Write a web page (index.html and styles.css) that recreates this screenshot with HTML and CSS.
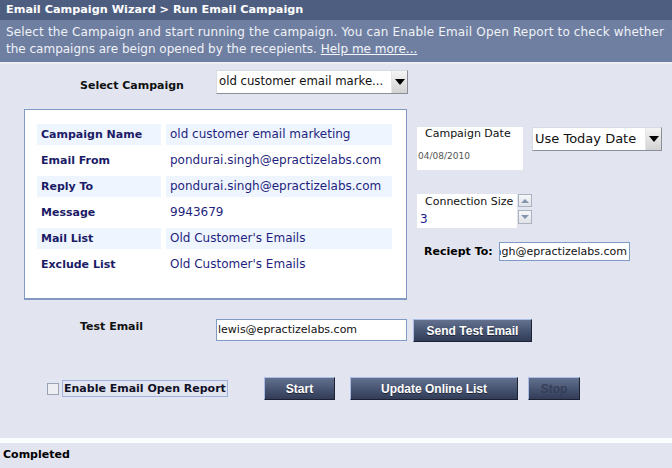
FILE: index.html
```html
<!DOCTYPE html>
<html>
<head>
<meta charset="utf-8">
<link rel="stylesheet" href="styles.css">
</head>
<body>
<div class="header">Email Campaign Wizard &gt; Run Email Campaign</div>
<div class="desc"><span class="l1">Select the Campaign and start running the campaign. You can Enable Email Open Report to check whether</span> the campaigns are beign opened by the recepients. <a href="#">Help me more...</a></div>
<div class="main">
  <div class="row r1">
    <span class="lbl lbl-select">Select Campaign</span>
    <div class="select sel-campaign"><span class="sel-text">old customer email marke...</span><span class="arrow"><i></i></span></div>
  </div>
  <div class="row r2">
    <div class="infobox">
      <div class="grid">
        <div class="k hl">Campaign Name</div><div class="v hl">old customer email marketing</div>
        <div class="k">Email From</div><div class="v">pondurai.singh@epractizelabs.com</div>
        <div class="k hl">Reply To</div><div class="v hl">pondurai.singh@epractizelabs.com</div>
        <div class="k">Message</div><div class="v">9943679</div>
        <div class="k hl">Mail List</div><div class="v hl">Old Customer's Emails</div>
        <div class="k">Exclude List</div><div class="v">Old Customer's Emails</div>
      </div>
    </div>
    <div class="side">
      <div class="daterow">
        <div class="datebox">
          <div class="dt-title">Campaign Date</div>
          <div class="dt-val">04/08/2010</div>
        </div>
        <div class="select sel-date"><span class="sel-text">Use Today Date</span><span class="arrow"><i></i></span></div>
      </div>
      <div class="connrow">
        <div class="connbox">
          <div class="cn-title">Connection Size</div>
          <div class="cn-val">3</div>
        </div>
        <div class="spin">
          <span class="spin-btn up"><i></i></span>
          <span class="spin-btn down"><i></i></span>
        </div>
      </div>
      <div class="reciept">
        <span class="lbl lbl-reciept">Reciept To:</span>
        <div class="input scroll"><span>pondurai.singh@epractizelabs.com</span></div>
      </div>
    </div>
  </div>
  <div class="row r3">
    <span class="lbl lbl-test">Test Email</span>
    <div class="input test-input">lewis@epractizelabs.com</div>
    <button class="btn btn-send">Send Test Email</button>
  </div>
  <div class="row r4">
    <span class="checkbox"></span>
    <span class="chk-label">Enable Email Open Report</span>
    <button class="btn btn-start">Start</button>
    <button class="btn btn-update">Update Online List</button>
    <button class="btn btn-stop">Stop</button>
  </div>
</div>
<div class="divider"></div>
<div class="status">Completed</div>
</body>
</html>
```
FILE: styles.css
```css
html, body {
  margin: 0;
  padding: 0;
}
body {
  width: 672px;
  height: 468px;
  overflow: hidden;
  background: #e2e5ef;
  font-family: "DejaVu Sans", Verdana, sans-serif;
  color: #111;
}
.header {
  height: 20px;
  background: #4e5e80;
  color: #fff;
  font-weight: bold;
  font-size: 11.25px;
  line-height: 20px;
  padding-left: 6px;
}
.desc {
  height: 44px;
  box-sizing: border-box;
  background: #6f7fa1;
  color: #f0f2f8;
  font-size: 12px;
  line-height: 17px;
  padding: 4px 6px 0;
  border-bottom: 2px solid #eceef4;
}
.desc .l1 {
  letter-spacing: 0.15px;
}
.desc a {
  color: #f4f6fb;
  text-decoration: underline;
}
.main {
  height: 374px;
  box-sizing: border-box;
  padding-top: 6px;
}
.row {
  display: flex;
  align-items: flex-start;
}
.lbl {
  font-weight: bold;
  font-size: 11px;
  color: #111;
  white-space: nowrap;
}
.lbl-select {
  box-sizing: border-box;
  width: 216px;
  padding-left: 80px;
  padding-top: 9px;
  line-height: 14px;
}
.select {
  box-sizing: border-box;
  height: 24px;
  background: #fff;
  border: 1px solid;
  border-color: #d8dbe2 #8a8f99 #8a8f99 #d8dbe2;
  display: flex;
  align-items: stretch;
}
.sel-text {
  flex: 1;
  overflow: hidden;
  white-space: nowrap;
  color: #111;
  padding-left: 2px;
  line-height: 21px;
}
.sel-campaign {
  width: 192px;
  font-size: 11.7px;
}
.sel-date {
  width: 130px;
  font-size: 13px;
}
.arrow {
  width: 15px;
  background: linear-gradient(#f4f4f4, #d2d2d2);
  border-left: 1px solid #e6e6e6;
  display: flex;
  align-items: center;
  justify-content: center;
}
.arrow i {
  width: 0;
  height: 0;
  border-left: 5px solid transparent;
  border-right: 5px solid transparent;
  border-top: 6px solid #000;
}
.r2 {
  margin-top: 15px;
}
.infobox {
  margin-left: 24px;
  width: 383px;
  height: 191px;
  box-sizing: border-box;
  background: #fff;
  border: 1px solid #8299c2;
  border-bottom-width: 2px;
  padding: 14px 0 0 12px;
}
.grid {
  display: grid;
  grid-template-columns: 124px 226px;
  grid-auto-rows: 21px;
  column-gap: 5px;
  row-gap: 5px;
}
.k, .v {
  line-height: 21px;
  padding-left: 4px;
  white-space: nowrap;
}
.k {
  font-weight: bold;
  font-size: 11px;
  color: #1b1b66;
}
.v {
  font-size: 12px;
  color: #1f1f80;
}
.hl {
  background: #eef5fe;
}
.side {
  margin-left: 10px;
  padding-top: 18px;
}
.daterow {
  display: flex;
  align-items: flex-start;
}
.datebox {
  width: 106px;
  height: 43px;
  background: #fff;
  box-sizing: border-box;
}
.dt-title {
  font-size: 11px;
  line-height: 14px;
  padding-left: 8px;
  color: #111;
}
.dt-val {
  font-size: 9px;
  line-height: 14px;
  margin-top: 8px;
  padding-left: 1px;
  color: #555;
}
.sel-date {
  margin-left: 9px;
}
.connrow {
  display: flex;
  margin-top: 24px;
}
.connbox {
  width: 100px;
  height: 34px;
  background: #fff;
}
.cn-title {
  font-size: 11px;
  line-height: 14px;
  padding-top: 1px;
  padding-left: 8px;
  color: #111;
}
.cn-val {
  font-size: 12px;
  line-height: 14px;
  padding-top: 3px;
  padding-left: 3px;
  color: #1a1a8c;
}
.spin {
  margin-left: 1px;
  width: 14px;
  display: flex;
  flex-direction: column;
  gap: 3px;
}
.spin-btn {
  box-sizing: border-box;
  height: 13px;
  border: 1px solid #aab2c2;
  background: linear-gradient(#f6f7f9, #dfe2e8);
  display: flex;
  align-items: center;
  justify-content: center;
}
.spin-btn.down {
  height: 14px;
}
.spin-btn i {
  width: 0;
  height: 0;
  border-left: 4px solid transparent;
  border-right: 4px solid transparent;
}
.spin-btn.up i {
  border-bottom: 4px solid #8594ad;
}
.spin-btn.down i {
  border-top: 4px solid #8594ad;
}
.reciept {
  display: flex;
  align-items: center;
  margin-top: 14px;
}
.lbl-reciept {
  width: 82px;
  box-sizing: border-box;
  padding-left: 7px;
  font-size: 11px;
  color: #000;
}
.input {
  box-sizing: border-box;
  background: #fff;
  border: 1px solid #7f9cc6;
  font-size: 11px;
  color: #111;
  white-space: nowrap;
  overflow: hidden;
}
.scroll {
  width: 131px;
  height: 19px;
  display: flex;
  justify-content: flex-end;
  align-items: center;
  padding-right: 2px;
}
.r3 {
  margin-top: 19px;
}
.lbl-test {
  box-sizing: border-box;
  width: 216px;
  padding-left: 80px;
  padding-top: 1px;
  line-height: 14px;
}
.test-input {
  width: 191px;
  height: 22px;
  line-height: 20px;
  padding-left: 1px;
}
.btn {
  box-sizing: border-box;
  height: 23px;
  margin: 0;
  padding: 0;
  background: linear-gradient(#63718f, #485573 50%, #323c57);
  border: 1px solid;
  border-color: #a9bde6 #1c2233 #1c2233 #a9bde6;
  color: #fff;
  font-family: "Liberation Sans", Arial, sans-serif;
  font-weight: bold;
  font-size: 12px;
  text-shadow: 0 1px 0 #1f2638;
}
.btn-send {
  margin-left: 6px;
  width: 119px;
}
.r4 {
  margin-top: 35px;
}
.checkbox {
  margin-left: 47px;
  margin-top: 6px;
  width: 12px;
  height: 12px;
  box-sizing: border-box;
  border: 1px solid #9aa3b4;
  background: #eceef3;
}
.chk-label {
  margin-left: 3px;
  margin-top: 3px;
  width: 166px;
  height: 17px;
  box-sizing: border-box;
  border: 1px solid #9fb4db;
  font-weight: bold;
  font-size: 11px;
  line-height: 15px;
  padding-left: 1px;
  color: #111128;
  white-space: nowrap;
}
.btn-start {
  margin-left: 36px;
  width: 71px;
}
.btn-update {
  margin-left: 15px;
  width: 168px;
}
.btn-stop {
  margin-left: 10px;
  width: 52px;
  color: #353e58;
  text-shadow: none;
}
.divider {
  height: 5px;
  background: #fbfcfe;
}
.status {
  height: 25px;
  line-height: 24px;
  padding-left: 3px;
  font-weight: bold;
  font-size: 11px;
  color: #000;
}
```
